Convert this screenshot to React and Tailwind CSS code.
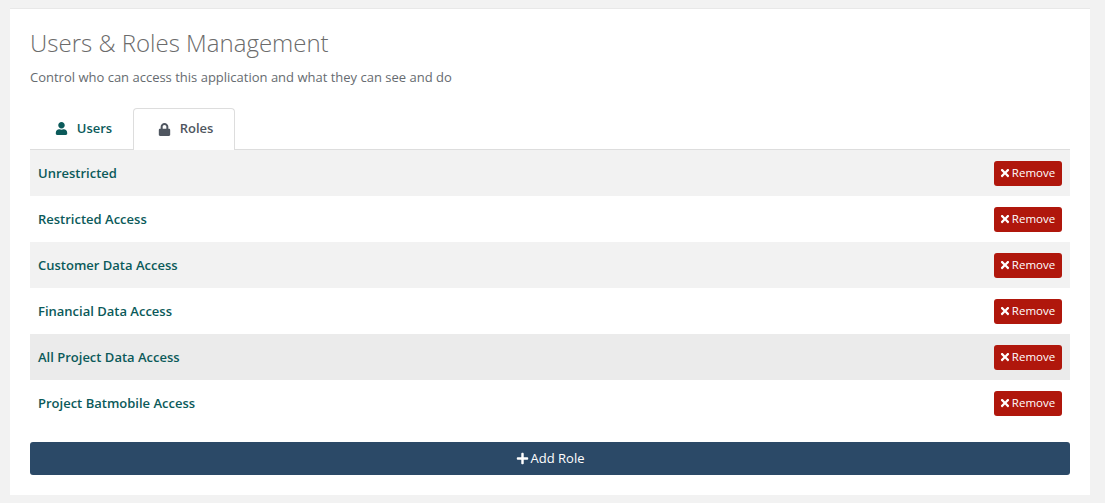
import { FaUser, FaLock, FaTimes, FaPlus } from "react-icons/fa";

const roles = [
  { name: "Unrestricted", bg: "bg-[#f2f2f2]" },
  { name: "Restricted Access", bg: "bg-white" },
  { name: "Customer Data Access", bg: "bg-[#f2f2f2]" },
  { name: "Financial Data Access", bg: "bg-white" },
  { name: "All Project Data Access", bg: "bg-[#ebebeb]" },
  { name: "Project Batmobile Access", bg: "bg-white" },
];

const RoleRow = ({ name, bg }) => (
  <div className={`${bg} h-[46px] flex items-center justify-between pl-2 pr-2`}>
    <span className="text-[13px] font-semibold text-[#0b5a5a] pt-[1px]">{name}</span>
    <button className="mt-[1px] h-[25px] w-[68px] pb-[1px] pr-[2px] flex items-center justify-center gap-[1px] rounded-[3px] bg-[#b0170c] text-white text-[11.5px]">
      <FaTimes className="w-[12px] h-[12px]" />
      Remove
    </button>
  </div>
);

export default function App() {
  return (
    <div
      className="min-h-screen bg-[#f2f2f2] pl-[10px] pr-[15px] pt-[8px] pb-[8px]"
      style={{ fontFamily: '"Open Sans", sans-serif' }}
    >
      <div className="bg-white border-t border-[#e8e8e8] h-[487px] px-[20px] pt-[17px]">
        <h1 className="text-[24px] leading-[33px] font-light text-[#6b6b6b]">
          Users &amp; Roles Management
        </h1>
        <p className="mt-[9px] text-[13px] leading-[18px] text-[#666b70]">
          Control who can access this application and what they can see and do
        </p>

        {/* tabs */}
        <div className="mt-[22px] flex pl-[1px] h-[42px] border-b border-[#dddddd]">
          <div className="w-[102px] pl-[3px] flex items-center justify-center gap-[9px] text-[13px] font-semibold text-[#0b5a5a]">
            <FaUser className="w-[13px] h-[13px]" />
            Users
          </div>
          <div className="w-[102px] h-[42px] pl-[3px] pb-[1px] flex items-center justify-center gap-[9px] rounded-t-[4px] border border-b-0 border-[#dddddd] bg-white text-[13px] font-semibold text-[#4f5660]">
            <FaLock className="w-[13px] h-[13px]" />
            Roles
          </div>
        </div>

        <div>
          {roles.map((role) => (
            <RoleRow key={role.name} name={role.name} bg={role.bg} />
          ))}
        </div>

        <button className="mt-[16px] w-full h-[33px] flex items-center justify-center gap-[2px] rounded-[3px] bg-[#2b4967] text-white text-[13px]">
          <FaPlus className="w-[13px] h-[13px]" />
          Add Role
        </button>
      </div>
    </div>
  );
}
